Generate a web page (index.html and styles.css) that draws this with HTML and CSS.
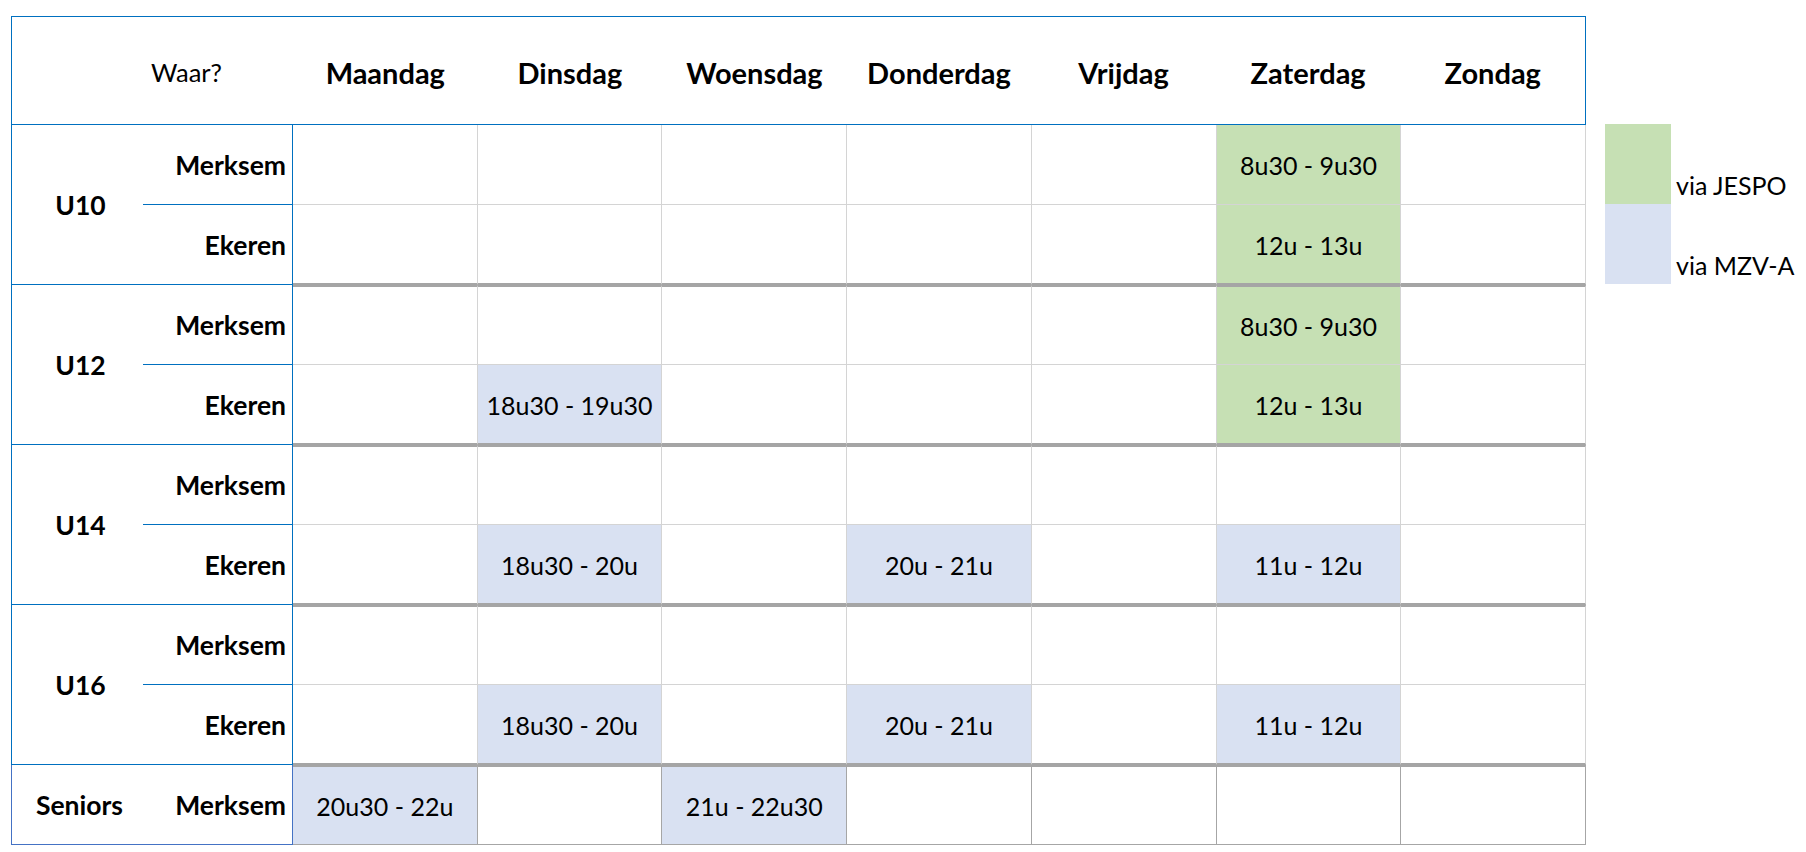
FILE: index.html
```html
<!DOCTYPE html>
<html>
<head>
<meta charset="utf-8">
<link rel="stylesheet" href="styles.css">
</head>
<body>
<div class="page">
  <div class="sheet">
    <div class="head">
      <div></div>
      <div class="waar">Waar?</div>
      <div class="day">Maandag</div>
      <div class="day">Dinsdag</div>
      <div class="day">Woensdag</div>
      <div class="day">Donderdag</div>
      <div class="day">Vrijdag</div>
      <div class="day">Zaterdag</div>
      <div class="day">Zondag</div>
    </div>

    <div class="group first">
      <div class="gname">U10</div>
      <div class="loc top">Merksem</div>
      <div class="c top"></div><div class="c top"></div><div class="c top"></div><div class="c top"></div><div class="c top"></div><div class="c top green">8u30 - 9u30</div><div class="c top"></div>
      <div class="loc">Ekeren</div>
      <div class="c bot"></div><div class="c bot"></div><div class="c bot"></div><div class="c bot"></div><div class="c bot"></div><div class="c bot green">12u - 13u</div><div class="c bot"></div>
    </div>

    <div class="group">
      <div class="gname">U12</div>
      <div class="loc top">Merksem</div>
      <div class="c top"></div><div class="c top"></div><div class="c top"></div><div class="c top"></div><div class="c top"></div><div class="c top green">8u30 - 9u30</div><div class="c top"></div>
      <div class="loc">Ekeren</div>
      <div class="c bot"></div><div class="c bot blue">18u30 - 19u30</div><div class="c bot"></div><div class="c bot"></div><div class="c bot"></div><div class="c bot green">12u - 13u</div><div class="c bot"></div>
    </div>

    <div class="group">
      <div class="gname">U14</div>
      <div class="loc top">Merksem</div>
      <div class="c top"></div><div class="c top"></div><div class="c top"></div><div class="c top"></div><div class="c top"></div><div class="c top"></div><div class="c top"></div>
      <div class="loc">Ekeren</div>
      <div class="c bot"></div><div class="c bot blue">18u30 - 20u</div><div class="c bot"></div><div class="c bot blue">20u - 21u</div><div class="c bot"></div><div class="c bot blue">11u - 12u</div><div class="c bot"></div>
    </div>

    <div class="group">
      <div class="gname">U16</div>
      <div class="loc top">Merksem</div>
      <div class="c top"></div><div class="c top"></div><div class="c top"></div><div class="c top"></div><div class="c top"></div><div class="c top"></div><div class="c top"></div>
      <div class="loc">Ekeren</div>
      <div class="c bot"></div><div class="c bot blue">18u30 - 20u</div><div class="c bot"></div><div class="c bot blue">20u - 21u</div><div class="c bot"></div><div class="c bot blue">11u - 12u</div><div class="c bot"></div>
    </div>

    <div class="group single">
      <div class="gname">Seniors</div>
      <div class="loc">Merksem</div>
      <div class="c blue">20u30 - 22u</div><div class="c"></div><div class="c blue">21u - 22u30</div><div class="c"></div><div class="c"></div><div class="c"></div><div class="c"></div>
    </div>
  </div>

  <div class="legend">
    <div class="lrow"><div class="sw sw-green"></div><div class="ltxt">via JESPO</div></div>
    <div class="lrow"><div class="sw sw-blue"></div><div class="ltxt">via MZV-A</div></div>
  </div>
</div>
</body>
</html>
```

FILE: styles.css
```css
* { box-sizing: border-box; }

html, body {
  margin: 0;
  padding: 0;
  background: #ffffff;
}

body {
  font-family: Lato, "Open Sans", sans-serif;
  font-size: 25px;
  color: #000000;
}

.page {
  display: flex;
  align-items: flex-start;
  gap: 19px;
  padding: 16px 0 0 11px;
}

.sheet {
  width: 1575px;
  display: flex;
  flex-direction: column;
}

.head {
  display: grid;
  grid-template-columns: 131px 150px repeat(7, 1fr);
  height: 109px;
  border: 1px solid #0070c0;
}

.head > div {
  display: flex;
  align-items: center;
  padding-top: 3px;
}

.waar {
  padding-left: 8px;
  font-size: 25.5px;
}

.day {
  justify-content: center;
  font-weight: 700;
  font-size: 29px;
}

.group {
  display: grid;
  grid-template-columns: 132px 150px repeat(7, 1fr);
  grid-template-rows: 80px 80px;
}

.group.single {
  grid-template-rows: 80px;
}

.group > div {
  display: flex;
  align-items: center;
  padding-top: 1px;
}

.gname {
  grid-row: 1 / span 2;
  justify-content: center;
  padding-left: 6px;
  font-weight: 700;
  font-size: 26.5px;
  border-left: 1px solid #0070c0;
  border-bottom: 1px solid #0070c0;
}

.single .gname {
  grid-row: 1;
  padding-left: 4px;
  border-left-color: #4472c4;
  border-bottom-color: #4472c4;
}

.loc {
  justify-content: flex-end;
  padding-right: 6px;
  font-weight: 700;
  font-size: 26.5px;
  border-right: 1px solid #0070c0;
  border-bottom: 1px solid #0070c0;
}

.single .loc {
  border-right-color: #4472c4;
  border-bottom-color: #4472c4;
}

.c {
  justify-content: center;
  white-space: nowrap;
  border-right: 1px solid #d4d4d4;
}

.c.top {
  border-top: 2px solid #a5a5a5;
  border-bottom: 1px solid #d4d4d4;
}

.first .c.top {
  border-top: none;
}

.c.bot {
  border-bottom: 2px solid #a5a5a5;
}

.single .c {
  border-top: 2px solid #a5a5a5;
  border-right: 1px solid #a6a6a6;
  border-bottom: 1px solid #a6a6a6;
}

.green { background: #c6e0b4; }
.blue { background: #d9e1f2; }

.legend {
  margin-top: 108px;
  display: flex;
  flex-direction: column;
}

.lrow {
  display: flex;
  height: 80px;
}

.sw {
  width: 66px;
  height: 80px;
}

.sw-green { background: #c6e0b4; }
.sw-blue { background: #d9e1f2; }

.ltxt {
  align-self: flex-end;
  padding-left: 5px;
  padding-bottom: 6px;
  line-height: 1;
  white-space: nowrap;
}
```
